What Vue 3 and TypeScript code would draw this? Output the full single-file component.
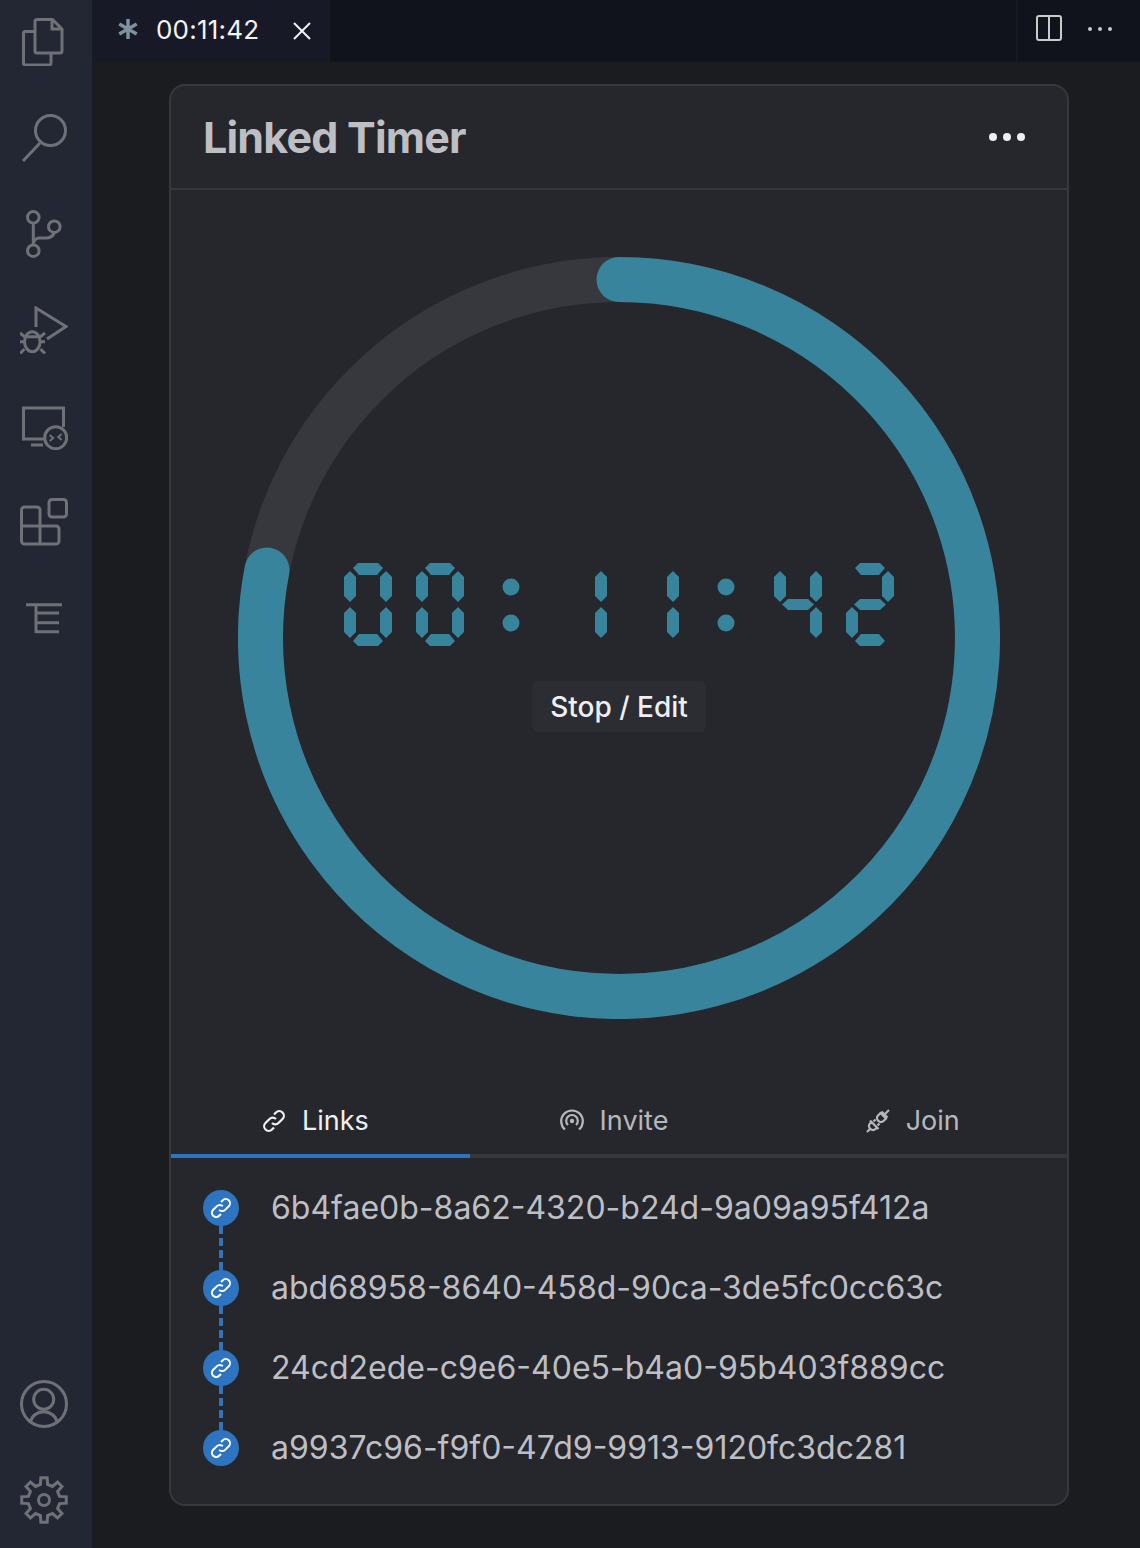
<script setup lang="ts">
// 7-segment polygons in a 48x83 box
const segs: Record<string, string> = {
  a: '9,5 14,0 34,0 39,5 33,12 15,12',
  b: '36,14 42,8 48,14 48,33 42,39 36,33',
  c: '36,50 42,44 48,50 48,69 42,75 36,69',
  d: '9,78 15,71 33,71 39,78 34,83 14,83',
  e: '0,50 6,44 12,50 12,69 6,75 0,69',
  f: '0,14 6,8 12,14 12,33 6,39 0,33',
  g: '8,41.500 14,36 34,36 40,41.500 34,47 14,47',
}
const digitMap: Record<string, string[]> = {
  '0': ['a', 'b', 'c', 'd', 'e', 'f'],
  '1': ['b', 'c'],
  '2': ['a', 'b', 'g', 'e', 'd'],
  '4': ['f', 'g', 'b', 'c'],
}
const clock = '00:11:42'.split('')

const links = [
  '6b4fae0b-8a62-4320-b24d-9a09a95f412a',
  'abd68958-8640-458d-90ca-3de5fc0cc63c',
  '24cd2ede-c9e6-40e5-b4a0-95b403f889cc',
  'a9937c96-f9f0-47d9-9913-9120fc3dc281',
]

// settings gear, 8 teeth around (24,24)
function gearPath(): string {
  const pts: string[] = []
  const at = (deg: number, r: number) => {
    const a = ((deg - 90) * Math.PI) / 180
    return `${(24 + r * Math.cos(a)).toFixed(2)} ${(24 + r * Math.sin(a)).toFixed(2)}`
  }
  for (let i = 0; i < 8; i++) {
    const c = i * 45
    pts.push(at(c - 13, 16), at(c - 8, 22.5), at(c + 8, 22.5), at(c + 13, 16))
  }
  return 'M' + pts.join('L') + 'Z'
}
const gear = gearPath()
</script>

<template>
  <div class="window">
    <nav class="activity">
      <div class="activity-group">
        <svg class="act" viewBox="0 0 48 48"><path d="M15 3.500a2 2 0 0 1 2-2h15.500l9.500 9.500v22a2 2 0 0 1-2 2H17a2 2 0 0 1-2-2zM32 1.500V11h10M15 13.500H5.500a2 2 0 0 0-2 2V45a2 2 0 0 0 2 2H29a2 2 0 0 0 2-2v-10"/></svg>
        <svg class="act" viewBox="0 0 48 48"><circle cx="30.500" cy="16.500" r="15"/><path d="M20 29 3 47"/></svg>
        <svg class="act" viewBox="0 0 48 48"><circle cx="13.300" cy="7.300" r="5.800"/><circle cx="13.300" cy="40.700" r="5.800"/><circle cx="34.300" cy="16.700" r="5.800"/><path d="M13.300 13v22M13.300 33c1-3 3-5 6-5h6c5 0 8-2 9-5.500"/></svg>
        <svg class="act" viewBox="0 0 48 48"><path d="M16 21V2l30 18.500L27 33"/><ellipse cx="12.300" cy="35.700" rx="7.800" ry="10"/><path d="M5 30.700h14.600M0 27l5 4M25 27l-5 4M0 35.700h4.500M20 35.700h5M0 47.500 4.500 43M25 47.500 20.500 43"/></svg>
        <svg class="act" viewBox="0 0 48 48"><path d="M24 37H3.500V6h40v19"/><path d="M11 43h12"/><circle cx="35.700" cy="35.700" r="11"/><path class="thin" d="M29.700 33l3.500 3-3.500 3M41.700 32l-3.500 3 3.500 3"/></svg>
        <svg class="act" viewBox="0 0 48 48"><path d="M1.500 28V12a3 3 0 0 1 3-3H17a3 3 0 0 1 3 3v34M1.500 28H36a3 3 0 0 1 3 3v12a3 3 0 0 1-3 3H4.500a3 3 0 0 1-3-3z"/><rect x="29" y="1.500" width="17.500" height="17.500" rx="3"/></svg>
        <svg class="act" viewBox="0 0 48 48"><path d="M6 10.700h36M16 10.700V39M16 19h23M16 28.700h23M16 37.700h23"/></svg>
      </div>
      <div class="activity-group">
        <svg class="act" viewBox="0 0 48 48"><circle cx="24" cy="24" r="22.500"/><circle cx="23.700" cy="19.300" r="10"/><path d="M10 43c1.500-7 7-11.300 13.700-11.300S36 36 37.500 43"/></svg>
        <svg class="act" viewBox="0 0 48 48"><path :d="gear"/><circle cx="24" cy="24" r="5.500"/></svg>
      </div>
    </nav>

    <div class="main">
      <header class="tabbar">
        <div class="tab">
          <svg class="tab-star" viewBox="0 0 20 22"><path d="M10 1v20M1.300 6l17.400 10M18.700 6 1.300 16"/></svg>
          <span class="tab-title">00:11:42</span>
          <svg class="tab-close" viewBox="0 0 18 18"><path d="M1 1l16 16M17 1 1 17"/></svg>
        </div>
        <div class="tabbar-actions">
          <svg class="split" viewBox="0 0 26 26"><rect x="1" y="1" width="24" height="24" rx="2"/><path d="M13 1v24"/></svg>
          <div class="mini-dots"><i></i><i></i><i></i></div>
        </div>
      </header>

      <section class="editor">
        <article class="card">
          <div class="card-head">
            <h1>Linked Timer</h1>
            <div class="dots"><i></i><i></i><i></i></div>
          </div>

          <div class="timer">
            <svg class="ring" viewBox="0 0 762 762">
              <circle class="ring-track" cx="381" cy="381" r="358.500" />
              <path class="ring-fill" d="M381 22.500A358.500 358.500 0 1 1 29 313" />
            </svg>
            <div class="readout">
              <div class="clock">
                <div v-for="(ch, i) in clock" :key="i" class="cell">
                  <svg v-if="ch === ':'" viewBox="0 0 48 83" class="digit">
                    <circle cx="24" cy="24" r="8.500" />
                    <circle cx="24" cy="60" r="8.500" />
                  </svg>
                  <svg v-else viewBox="0 0 48 83" class="digit">
                    <polygon v-for="s in digitMap[ch]" :key="s" :points="segs[s]" />
                  </svg>
                </div>
              </div>
              <button class="stop">Stop / Edit</button>
            </div>
          </div>

          <div class="tabs">
            <div class="tab-item active">
              <svg viewBox="0 0 24 24"><path d="M10 14a4.500 4.500 0 0 0 6.500 0l4-4a4.500 4.500 0 0 0-6.500-6.500l-2 2"/><path d="M14 10a4.500 4.500 0 0 0-6.500 0l-4 4a4.500 4.500 0 0 0 6.500 6.500l2-2"/></svg>
              Links
            </div>
            <div class="tab-item">
              <svg viewBox="0 0 24 24"><path d="M5 20.500a10.800 10.800 0 1 1 14 0"/><path d="M8 16a5.800 5.800 0 1 1 8 0"/><circle cx="12" cy="12" r="2.200" class="solid"/></svg>
              Invite
            </div>
            <div class="tab-item">
              <svg viewBox="0 0 24 24"><path d="M1 23l4-4M23 1l-4 4M15.500 2.500l6 6M14.500 4l5.500 5.500-2.500 2.500a3.500 3.500 0 0 1-5 0l-.5-.5a3.500 3.500 0 0 1 0-5zM4 11.500l8.500 8.500M5.500 13l-1.500 1.500a3.500 3.500 0 0 0 0 5l.5.500a3.500 3.500 0 0 0 5 0l1.500-1.500M9.500 10.500 7.500 12.500M13.500 14.500l-2 2"/></svg>
              Join
            </div>
          </div>

          <ul class="links">
            <li v-for="(id, i) in links" :key="id" class="link-row">
              <span class="node">
                <svg viewBox="0 0 24 24"><path d="M10 14a4.500 4.500 0 0 0 6.500 0l4-4a4.500 4.500 0 0 0-6.500-6.500l-2 2"/><path d="M14 10a4.500 4.500 0 0 0-6.500 0l-4 4a4.500 4.500 0 0 0 6.500 6.500l2-2"/></svg>
                <span v-if="i < links.length - 1" class="connector"></span>
              </span>
              <span class="link-id">{{ id }}</span>
            </li>
          </ul>
        </article>
      </section>
    </div>
  </div>
</template>

<style>
html, body { margin: 0; background: #1b1c1f; }
</style>

<style scoped>
.window {
  display: flex;
  width: 1140px;
  height: 1548px;
  overflow: hidden;
  font-family: Inter, "Liberation Sans", sans-serif;
  background: #1b1c1f;
}

.activity {
  width: 92px;
  flex-shrink: 0;
  background: #222733;
  display: flex;
  flex-direction: column;
  justify-content: space-between;
  padding: 18px 0 24px 20px;
  box-sizing: border-box;
}
.activity-group { display: flex; flex-direction: column; gap: 48px; }
.act {
  display: block;
  width: 48px;
  height: 48px;
  fill: none;
  stroke: #6f7177;
  stroke-width: 3;
}
.act .thin { stroke-width: 2; }

.main { flex: 1; display: flex; flex-direction: column; min-width: 0; }

.tabbar {
  height: 62px;
  flex-shrink: 0;
  display: flex;
  justify-content: space-between;
  background: #11131c;
}
.tab {
  width: 238px;
  background: #171a26;
  display: flex;
  align-items: center;
  box-sizing: border-box;
  padding: 0 0 4px 26px;
}
.tab-star {
  width: 20px;
  height: 22px;
  margin-right: 18px;
  fill: none;
  stroke: #7d919f;
  stroke-width: 3.500;
}
.tab-title {
  color: #f2f3f5;
  font-size: 26px;
  letter-spacing: 0.2px;
  width: 137px;
}
.tab-close { width: 18px; height: 18px; margin-top: 4px; fill: none; stroke: #f2f3f5; stroke-width: 2; }
.tabbar-actions {
  display: flex;
  align-items: center;
  border-left: 2px solid #171922;
  width: 124px;
  box-sizing: border-box;
  padding: 0 0 6px 18px;
  gap: 26px;
}
.split { width: 26px; height: 26px; fill: none; stroke: #c9cacc; stroke-width: 2; }
.mini-dots { display: flex; gap: 6px; margin-top: 2px; }
.mini-dots i { width: 4px; height: 4px; border-radius: 50%; background: #c9cacc; }

.editor { flex: 1; padding: 22px 71px 42px 77px; min-height: 0; }
.card {
  height: 100%;
  box-sizing: border-box;
  border: 2px solid #37383d;
  border-radius: 16px;
  background: #26272c;
  display: flex;
  flex-direction: column;
}

.card-head {
  height: 102px;
  flex-shrink: 0;
  border-bottom: 2px solid #37383d;
  display: flex;
  align-items: center;
  justify-content: space-between;
  padding: 0 42px 0 32px;
}
.card-head h1 {
  margin: 0;
  color: #bebfc5;
  font-size: 43px;
  font-weight: 700;
  letter-spacing: -0.8px;
}
.dots { display: flex; gap: 6px; }
.dots i { width: 8px; height: 8px; border-radius: 50%; background: #eeeff2; }

.timer {
  height: 762px;
  flex-shrink: 0;
  margin-top: 67px;
  position: relative;
  display: flex;
  justify-content: center;
}
.ring { width: 762px; height: 762px; display: block; }
.ring-track { fill: none; stroke: #37383d; stroke-width: 45; }
.ring-fill { fill: none; stroke: #38849c; stroke-width: 45; stroke-linecap: round; }

.readout {
  position: absolute;
  top: 306px;
  left: 173px;
  width: 576px;
  display: flex;
  flex-direction: column;
  align-items: center;
}
.clock { display: flex; width: 576px; }
.cell { width: 71.700px; flex-shrink: 0; }
.digit { display: block; width: 48px; height: 83px; fill: #38849c; }
.stop {
  margin-top: 35px;
  margin-left: -26px;
  height: 51px;
  padding: 0 18px;
  border: 0;
  border-radius: 6px;
  background: #2c2d33;
  color: #eeeff3;
  font: 500 28px Inter, "Liberation Sans", sans-serif;
}

.tabs {
  display: flex;
  flex-shrink: 0;
  margin-top: 72px;
  height: 67px;
  box-sizing: border-box;
  border-bottom: 4px solid #37383d;
}
.tab-item {
  flex: 1;
  display: flex;
  align-items: center;
  justify-content: center;
  gap: 16px;
  font-size: 27px;
  color: #b7b8bd;
  margin-bottom: -4px;
  border-bottom: 4px solid transparent;
  padding: 0 10px 4px 0;
  box-sizing: border-box;
}
.tab-item svg { width: 24px; height: 24px; fill: none; stroke: currentColor; stroke-width: 2.200; }
.tab-item svg .solid { fill: currentColor; stroke: none; }
.tab-item.active { color: #eeeff3; border-bottom-color: #2f74c0; }

.links {
  list-style: none;
  margin: 0;
  padding: 10px 0 0 32px;
}
.link-row {
  display: flex;
  align-items: center;
  height: 80px;
  position: relative;
}
.node {
  position: relative;
  width: 36px;
  height: 36px;
  border-radius: 50%;
  background: #2f74c0;
  display: flex;
  align-items: center;
  justify-content: center;
}
.node svg { width: 22px; height: 22px; fill: none; stroke: #fff; stroke-width: 2.200; }
.connector {
  position: absolute;
  top: 36px;
  left: 16px;
  height: 44px;
  border-left: 4px dashed #2f74c0;
}
.link-id {
  margin: 0 0 2px 32px;
  color: #bebfc5;
  font-size: 32px;
}
</style>
